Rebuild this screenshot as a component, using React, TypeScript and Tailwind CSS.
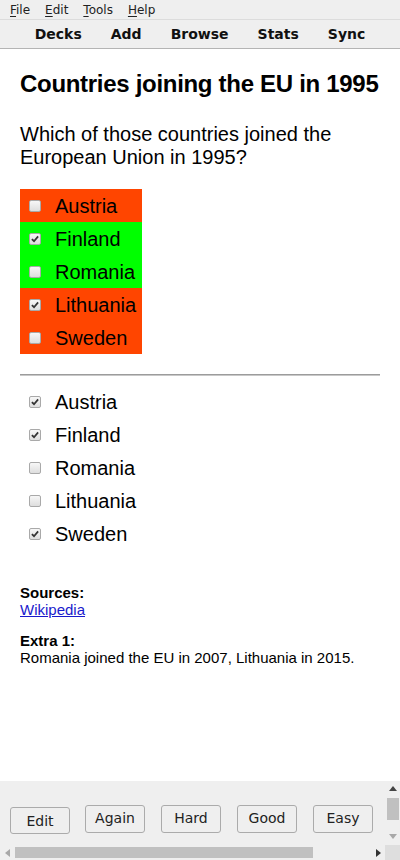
import React from "react"

const countries = [
  { name: "Austria", ok: false, picked: false, correct: true },
  { name: "Finland", ok: true, picked: true, correct: true },
  { name: "Romania", ok: true, picked: false, correct: false },
  { name: "Lithuania", ok: false, picked: true, correct: false },
  { name: "Sweden", ok: false, picked: false, correct: true },
]

function Box({ checked }: { checked: boolean }) {
  return (
    <span className="flex h-[12px] w-[12px] items-center justify-center rounded-[2px] border border-[#a9a9a9] bg-gradient-to-b from-[#f7f7f7] to-[#dedede]">
      {checked && (
        <svg width="8" height="8" viewBox="0 0 9 9">
          <path d="M1 4.6 L3.4 7 L8 1.6" fill="none" stroke="#333" strokeWidth="2" />
        </svg>
      )}
    </span>
  )
}

function Tri({ dir, color }: { dir: "up" | "down" | "left" | "right"; color: string }) {
  const pts = {
    up: "0,5 4,0 8,5",
    down: "0,0 8,0 4,5",
    left: "5,0 5,8 0,4",
    right: "0,0 5,4 0,8",
  }[dir]
  const vertical = dir === "up" || dir === "down"
  return (
    <svg width={vertical ? 8 : 5} height={vertical ? 5 : 8} viewBox={vertical ? "0 0 8 5" : "0 0 5 8"}>
      <polygon points={pts} fill={color} />
    </svg>
  )
}

export default function App() {
  return (
    <div className="flex h-[860px] w-[400px] flex-col overflow-hidden bg-white">
      {/* Menu bar */}
      <div className="flex h-[20px] items-center gap-[15px] border-b border-[#dcdcdc] bg-[#efefef] pl-[10px] text-[12px] text-[#222] [font-family:'DejaVu_Sans',sans-serif]">
        {["File", "Edit", "Tools", "Help"].map((m) => (
          <span key={m}>
            <span className="underline underline-offset-2">{m[0]}</span>
            {m.slice(1)}
          </span>
        ))}
      </div>

      {/* Toolbar */}
      <div className="flex h-[29px] items-center justify-center gap-[29px] border-b border-[#b4b4b4] bg-[#efefef] text-[14px] font-bold text-[#111] [font-family:'DejaVu_Sans',sans-serif]">
        {["Decks", "Add", "Browse", "Stats", "Sync"].map((t) => (
          <span key={t}>{t}</span>
        ))}
      </div>

      {/* Card */}
      <div className="flex-1 px-5 pt-[21px] text-black [font-family:'Liberation_Sans',Arial,sans-serif]">
        <h1 className="whitespace-nowrap text-[24px] font-bold leading-[28px] tracking-[-0.3px]">
          Countries joining the EU in 1995
        </h1>
        <p className="mt-[25px] text-[20px] leading-[23px]">
          Which of those countries joined the
          <br />
          European Union in 1995?
        </p>

        <div className="mt-[20px] w-fit">
          {countries.map((c) => (
            <div
              key={c.name}
              className={`flex h-[33px] items-center pr-[6px] text-[20px] ${c.ok ? "bg-[#00ff00]" : "bg-[#ff4500]"}`}
            >
              <span className="ml-[9px] mr-[14px]">
                <Box checked={c.picked} />
              </span>
              <span>{c.name}</span>
            </div>
          ))}
        </div>

        <div className="mt-[20px] h-[2px] border-t border-b border-t-[#9c9c9c] border-b-[#c8c8c8]" />

        <div className="mt-[9px]">
          {countries.map((c) => (
            <div key={c.name} className="flex h-[33px] items-center text-[20px]">
              <span className="ml-[9px] mr-[14px]">
                <Box checked={c.correct} />
              </span>
              <span>{c.name}</span>
            </div>
          ))}
        </div>

        <div className="mt-[34px] text-[15px] leading-[17px]">
          <div className="font-bold">Sources:</div>
          <a className="text-[#1a1acc] underline">Wikipedia</a>
        </div>
        <div className="mt-[14px] text-[15px] leading-[17px]">
          <div className="font-bold">Extra 1:</div>
          <div>Romania joined the EU in 2007, Lithuania in 2015.</div>
        </div>
      </div>

      {/* Answer panel */}
      <div className="grid h-[79px] grid-cols-[385px_15px] grid-rows-[64px_15px] bg-[#efefef] text-[14px] text-[#222] [font-family:'DejaVu_Sans',sans-serif]">
        <div className="flex items-start pl-[10px]">
          <button className="mt-[26px] h-[27px] w-[60px] rounded-[3px] border border-[#ababab] bg-[#efefef] pt-[2px]">
            Edit
          </button>
          <div className="ml-[15px] flex gap-[16px]">
            {["Again", "Hard", "Good", "Easy"].map((b) => (
              <button
                key={b}
                className="mt-[24px] h-[28px] w-[60px] rounded-[3px] border border-[#ababab] bg-[#efefef] pb-[2px]"
              >
                {b}
              </button>
            ))}
          </div>
        </div>

        <div className="flex flex-col items-center">
          <div className="mt-[5px]">
            <Tri dir="up" color="#444" />
          </div>
          <div className="mt-[7px] h-[22px] w-[12px] bg-[#c0c0c0]" />
          <div className="mt-[14px]">
            <Tri dir="down" color="#a8a8a8" />
          </div>
        </div>

        <div className="flex items-center">
          <div className="ml-[5px]">
            <Tri dir="left" color="#a8a8a8" />
          </div>
          <div className="ml-[5px] h-[11px] w-[298px] bg-[#c0c0c0]" />
          <div className="ml-[63px]">
            <Tri dir="right" color="#333" />
          </div>
        </div>

        <div className="bg-[#dedede]" />
      </div>
    </div>
  )
}
